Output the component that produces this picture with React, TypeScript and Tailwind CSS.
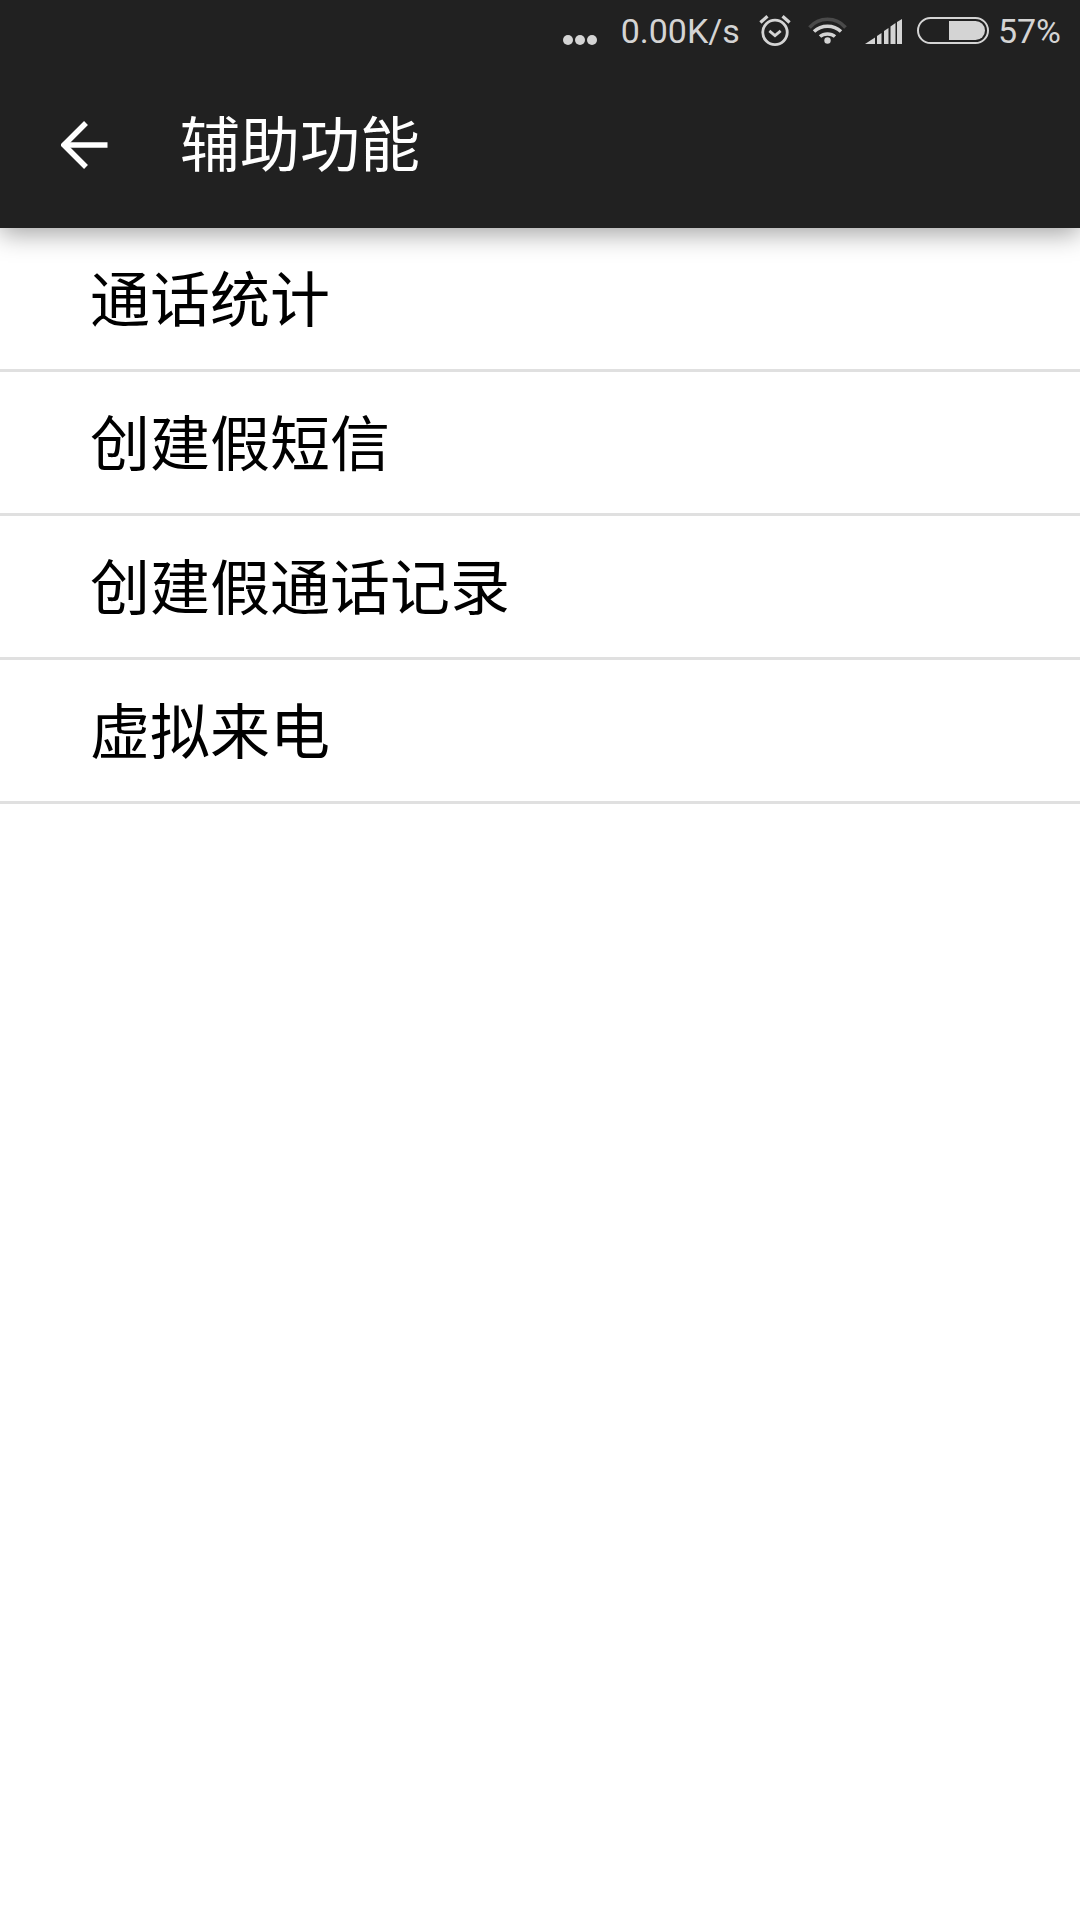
import React from 'react';

const ITEMS = ['通话统计', '创建假短信', '创建假通话记录', '虚拟来电'];

function StatusIcons() {
  return (
    <>
      <svg width="32" height="32" viewBox="0 0 34 34" className="ml-[19px] mt-[-1px]" fill="none" stroke="#d4d4d4">
        <circle cx="17" cy="19.5" r="13" strokeWidth="3" />
        <path d="M11 18l6 5 6-5" strokeWidth="3" />
        <path d="M1.5 9L9 2.5M32.5 9L25 2.5" strokeWidth="3.5" />
      </svg>
      <svg width="39" height="27" viewBox="0 0 39 27" className="ml-[17px]" fill="none">
        <path d="M1.5 10.5C11 -0.5 28 -0.5 37.5 10.5" stroke="#4a4a4a" strokeWidth="3.5" />
        <path d="M6 14.5C13.5 7.5 25.5 7.5 33 14.5" stroke="#d4d4d4" strokeWidth="3.5" />
        <path d="M12 19.5C16 16 23 16 27 19.5" stroke="#d4d4d4" strokeWidth="3.5" />
        <circle cx="19.5" cy="23.5" r="3.2" fill="#d4d4d4" />
      </svg>
      <svg width="37" height="25" viewBox="0 0 37 25" className="ml-[18px] mt-[2px]" fill="#d4d4d4">
        <path d="M0 25L10 18.5V25Z" />
        <path d="M12 17L16.5 14V25H12Z" />
        <path d="M19 12L23.5 9V25H19Z" />
        <path d="M25.5 7.5L30.5 4V25H25.5Z" />
        <path d="M32 3L37 0V25H32Z" />
      </svg>
      <div className="ml-[15px] flex h-[27px] w-[72px] justify-end rounded-full border-2 border-[#d4d4d4] p-[2px]">
        <div className="h-full w-[36px] rounded-r-full bg-[#d4d4d4]" />
      </div>
    </>
  );
}

export default function App() {
  return (
    <div className="flex h-[1920px] w-[1080px] flex-col bg-white font-['Roboto','Noto_Sans_CJK_SC',sans-serif]">
      <header className="relative z-10 h-[228px] bg-[#212121] shadow-[0_6px_24px_rgba(0,0,0,0.36)]">
        <div className="flex h-[60px] items-center justify-end pr-[19px]">
          <div className="flex items-center gap-[2px] pt-[20px]">
            <span className="h-[10px] w-[10px] rounded-full bg-[#d4d4d4]" />
            <span className="h-[10px] w-[10px] rounded-full bg-[#d4d4d4]" />
            <span className="h-[10px] w-[10px] rounded-full bg-[#d4d4d4]" />
          </div>
          <span className="ml-[24px] pt-[2px] text-[34px] leading-none text-[#d4d4d4]">0.00K/s</span>
          <StatusIcons />
          <span className="ml-[9px] pt-[2px] text-[34px] leading-none text-[#d4d4d4]">57%</span>
        </div>
        <div className="flex h-[168px] items-start">
          <svg width="48" height="48" viewBox="0 0 48 48" className="ml-[61px] mt-[61px]" fill="none" stroke="white" strokeWidth="5.5">
            <path d="M46.5 24H3" />
            <path d="M25 2L3 24l22 22" />
          </svg>
          <span className="ml-[71px] mt-[47px] text-[60px] leading-[80px] text-white">辅助功能</span>
        </div>
      </header>
      <main>
        {ITEMS.map((item) => (
          <div key={item} className="flex h-[144px] items-center border-b-[3px] border-[#e0e0e0] pl-[90px] pt-[6px]">
            <span className="text-[60px] leading-none text-black">{item}</span>
          </div>
        ))}
      </main>
    </div>
  );
}
